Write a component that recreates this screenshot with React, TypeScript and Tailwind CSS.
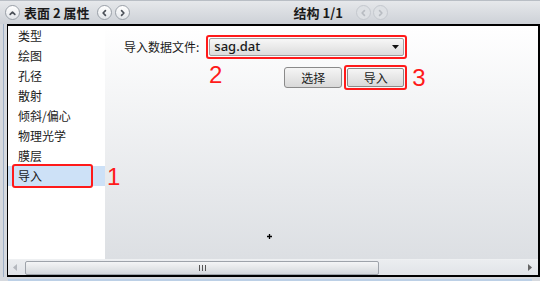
import React from 'react';

const FONT = { fontFamily: '"Noto Sans CJK SC", "Liberation Sans", sans-serif' };
const DIGIT = { fontFamily: '"Liberation Sans", sans-serif' };

const NAV_ITEMS = ['类型', '绘图', '孔径', '散射', '倾斜/偏心', '物理光学', '膜层', '导入'];

const CircleBtn: React.FC<{ dir: 'up' | 'left' | 'right'; disabled?: boolean }> = ({ dir, disabled }) => {
  const stroke = disabled ? '#b8bcc2' : '#4a4f57';
  const d = dir === 'up' ? 'M4.5 8.5 L7 6 L9.5 8.5' : dir === 'left' ? 'M8 4.5 L5.5 7 L8 9.5' : 'M6 4.5 L8.5 7 L6 9.5';
  return (
    <span
      className={`w-[15px] h-[15px] rounded-full flex items-center justify-center border ${
        disabled ? 'border-[#c4c8ce] bg-[#dde0e4]' : 'border-[#9aa0a8] bg-gradient-to-b from-white to-[#e3e6ea]'
      }`}
    >
      <svg width="14" height="14" viewBox="0 0 14 14">
        <path d={d} fill="none" stroke={stroke} strokeWidth="1.8" strokeLinecap="round" strokeLinejoin="round" />
      </svg>
    </span>
  );
};

const App: React.FC = () => {
  return (
    <div className="w-[540px] h-[281px] bg-[#d6d9de] flex flex-col text-[12px] text-[#1a1a1a] overflow-hidden" style={FONT}>
      {/* Header bar */}
      <div className="h-[24px] flex items-center pl-[5px] pr-[4px] bg-gradient-to-b from-[#e6e8eb] to-[#cdd1d7] border-t border-[#b9bec5]">
        <div className="flex items-center gap-[4px]">
          <CircleBtn dir="up" />
          <span className="font-bold text-[13px] leading-none">表面 2 属性</span>
        </div>
        <div className="flex items-center gap-[3px] ml-[7px]">
          <CircleBtn dir="left" />
          <CircleBtn dir="right" />
        </div>
        <div className="flex items-center ml-[164px]">
          <span className="font-bold text-[13px] leading-none mr-[13px]">结构 1/1</span>
          <div className="flex items-center gap-[2px]">
            <CircleBtn dir="left" disabled />
            <CircleBtn dir="right" disabled />
          </div>
        </div>
      </div>

      {/* Body */}
      <div className="flex-1 flex pl-[3px] pb-[2px]">
        <div className="w-[1px] bg-[#9fb1c8] mr-[3px]" />
        <div className="flex-1 flex flex-col border-t-2 border-l border-r-2 border-b-2 border-black">
          <div className="flex-1 flex">
            {/* Left list */}
            <div className="w-[97px] bg-white flex flex-col">
              {NAV_ITEMS.map((item, i) => {
                const selected = i === NAV_ITEMS.length - 1;
                return (
                  <div
                    key={item}
                    className={`h-[20px] flex items-center pl-[10px] leading-none ${selected ? 'bg-[#cde1f7] relative' : ''}`}
                  >
                    {item}
                    {selected && (
                      <span className="absolute left-[4px] top-[-2px] w-[81px] h-[24px] border-2 border-[#ff1a1a] rounded-[3px]" />
                    )}
                  </div>
                );
              })}
            </div>

            {/* Content */}
            <div className="flex-1 relative bg-gradient-to-b from-white to-[#dcdfe3]">
              <div className="flex items-center pt-[9px] pl-[19px]">
                <span className="mr-[7px]">导入数据文件:</span>
                <div className="w-[201px] h-[24px] border-2 border-[#ff1a1a] rounded-[3px] p-[1px]">
                  <div className="h-full flex items-center justify-between px-[4px] bg-gradient-to-b from-[#f7f7f7] to-[#dcdcdc] border border-[#a0a0a0] rounded-[2px]">
                    <span className="text-[13px] font-medium" style={{ fontFamily: '"Noto Sans", "Liberation Sans", sans-serif' }}>sag.dat</span>
                    <svg width="7" height="4" viewBox="0 0 7 4">
                      <path d="M0 0 H7 L3.5 4 Z" fill="#111" />
                    </svg>
                  </div>
                </div>
              </div>

              <div className="flex items-start mt-[1px]">
                <span className="ml-[104px] text-[#ff1a1a] text-[24px] leading-none mt-[3px]" style={DIGIT}>2</span>
                <div className="ml-[62px] mt-[7px] w-[58px] h-[21px] flex items-center justify-center border border-[#8a8a8a] rounded-[3px] bg-gradient-to-b from-[#f5f5f5] to-[#d9d9d9]">
                  选择
                </div>
                <div className="ml-[2px] mt-[5px] w-[63px] h-[25px] border-2 border-[#ff1a1a] rounded-[3px] p-[1px]">
                  <div className="h-full flex items-center justify-center border border-[#8a8a8a] rounded-[2px] bg-gradient-to-b from-[#f5f5f5] to-[#d9d9d9]">
                    导入
                  </div>
                </div>
                <span className="ml-[5px] mt-[6px] text-[#ff1a1a] text-[24px] leading-none" style={DIGIT}>3</span>
              </div>

              {/* "1" marker beside selected item */}
              <span className="absolute left-[2px] top-[139px] text-[#ff1a1a] text-[24px] leading-none" style={DIGIT}>1</span>

              {/* stray crosshair dot */}
              <svg className="absolute left-[162px] top-[208px]" width="5" height="5" viewBox="0 0 5 5">
                <path d="M2.5 0 V5 M0 2.5 H5" stroke="#000" strokeWidth="1.3" />
              </svg>
            </div>
          </div>

          {/* Horizontal scrollbar */}
          <div className="h-[16px] flex items-center bg-gradient-to-b from-[#ebedf0] to-[#e1e4e8] border-t border-[#eef0f2]">
            <svg className="ml-[5px]" width="4" height="7" viewBox="0 0 4 7">
              <path d="M4 0 V7 L0 3.5 Z" fill="#b4b8be" />
            </svg>
            <div className="ml-[8px] w-[354px] h-[14px] border border-[#9ea3aa] rounded-[2px] bg-gradient-to-b from-[#f4f5f6] to-[#d5d8dc] flex items-center justify-center">
              <svg width="7" height="6" viewBox="0 0 7 6">
                <path d="M0.5 0 V6 M3.5 0 V6 M6.5 0 V6" stroke="#555" strokeWidth="1" />
              </svg>
            </div>
            <div className="flex-1" />
            <svg className="mr-[6px]" width="4" height="7" viewBox="0 0 4 7">
              <path d="M0 0 V7 L4 3.5 Z" fill="#666" />
            </svg>
          </div>
        </div>
      </div>
      <div className="h-[2px] bg-[#bcd0e6] mx-[8px]" />
    </div>
  );
};

export default App;
